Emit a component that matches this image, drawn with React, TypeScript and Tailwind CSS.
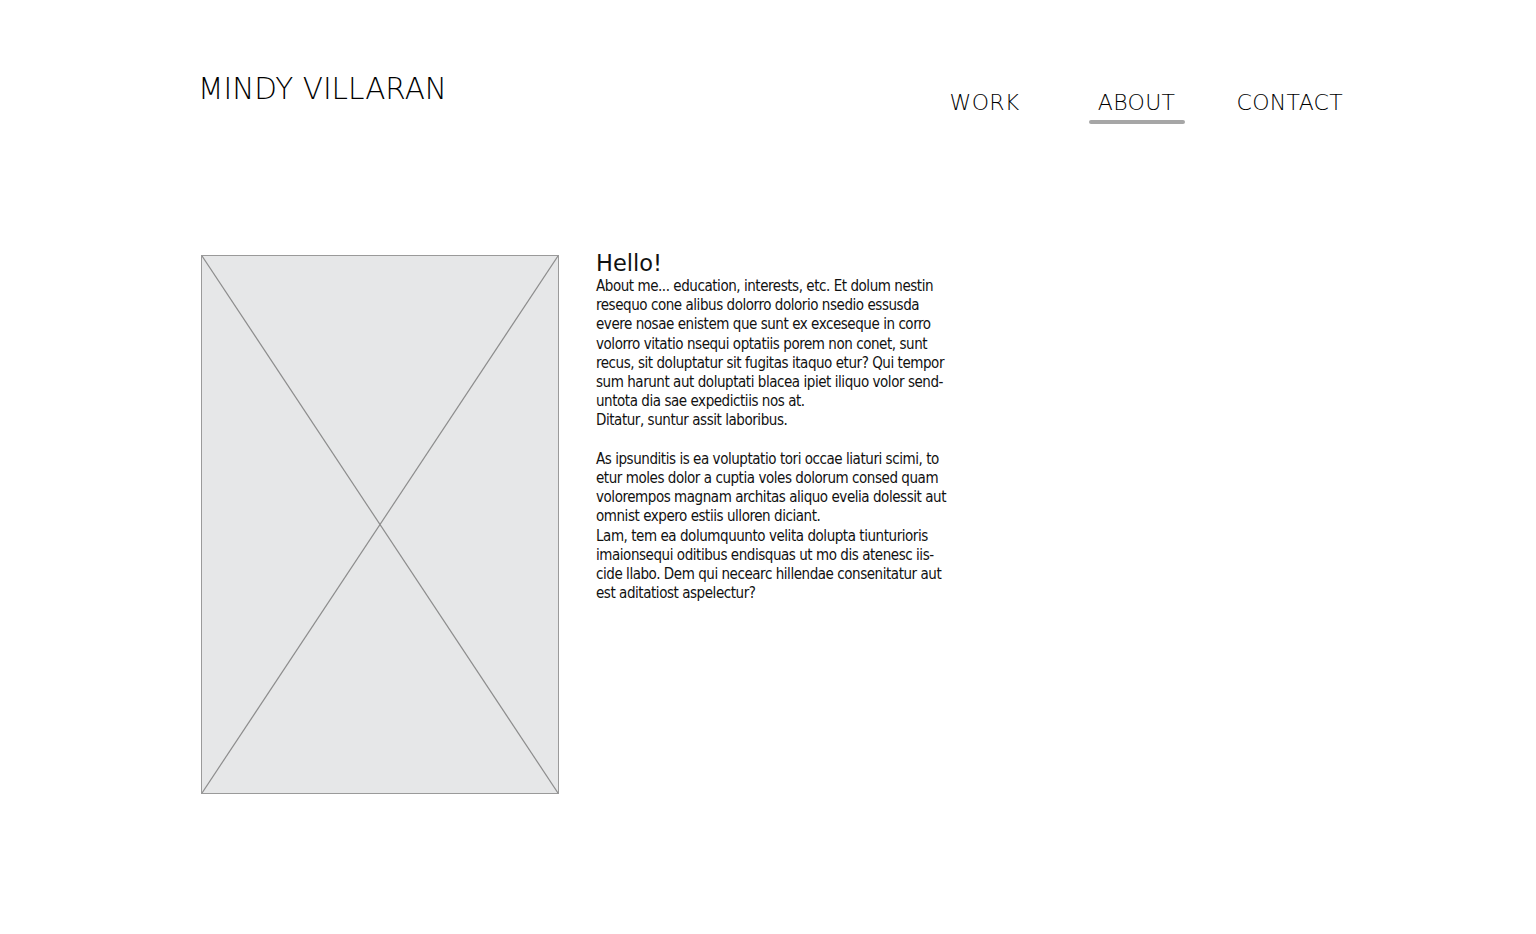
const lines1 = [
  "About me... education, interests, etc. Et dolum nestin",
  "resequo cone alibus dolorro dolorio nsedio essusda",
  "evere nosae enistem que sunt ex exceseque in corro",
  "volorro vitatio nsequi optatiis porem non conet, sunt",
  "recus, sit doluptatur sit fugitas itaquo etur? Qui tempor",
  "sum harunt aut doluptati blacea ipiet iliquo volor send-",
  "untota dia sae expedictiis nos at.",
  "Ditatur, suntur assit laboribus.",
]

const lines2 = [
  "As ipsunditis is ea voluptatio tori occae liaturi scimi, to",
  "etur moles dolor a cuptia voles dolorum consed quam",
  "volorempos magnam architas aliquo evelia dolessit aut",
  "omnist expero estiis ulloren diciant.",
  "Lam, tem ea dolumquunto velita dolupta tiunturioris",
  "imaionsequi oditibus endisquas ut mo dis atenesc iis-",
  "cide llabo. Dem qui necearc hillendae consenitatur aut",
  "est aditatiost aspelectur?",
]

const App = () => {
  return (
    <div className="min-h-screen bg-white text-[#111] font-['DejaVu_Sans_Condensed',sans-serif]">
      <header className="flex items-start pl-[198px] pr-[193px] pt-[75px]">
        <h1 className="text-[29.5px] leading-none font-['DejaVu_Sans',sans-serif] font-extralight text-black">MINDY VILLARAN</h1>
        <nav className="ml-auto flex items-start pt-[17px] text-[22px] tracking-[0.3px] font-['DejaVu_Sans',sans-serif] font-extralight leading-none text-black">
          <a className="mr-[69px]">WORK</a>
          <a className="mr-[52px] flex flex-col items-center">
            <span>ABOUT</span>
            <span className="mt-[6px] h-[4px] w-[96px] bg-[#a6a6a6] rounded-sm" />
          </a>
          <a>CONTACT</a>
        </nav>
      </header>

      <main className="flex pl-[201px] pt-[131px] gap-[37px]">
        <div className="relative w-[358px] h-[539px] border border-[#9a9a9a] bg-[#e6e7e8]">
          <svg className="absolute inset-0 h-full w-full" viewBox="0 0 356 537" preserveAspectRatio="none">
            <line x1="0" y1="0" x2="356" y2="537" stroke="#8c8c8c" strokeWidth="1.2" />
            <line x1="356" y1="0" x2="0" y2="537" stroke="#8c8c8c" strokeWidth="1.2" />
          </svg>
        </div>
        <div className="-mt-[6px] text-[15px] tracking-[-0.45px] leading-[19.2px]">
          <h2 className="text-[22.5px] leading-[28px] tracking-[0px] font-['DejaVu_Sans',sans-serif]">Hello!</h2>
          {lines1.map((l) => (
            <p key={l} className="whitespace-nowrap">{l}</p>
          ))}
          <p className="h-[19.2px]" />
          {lines2.map((l) => (
            <p key={l} className="whitespace-nowrap">{l}</p>
          ))}
        </div>
      </main>
    </div>
  )
}

export default App
